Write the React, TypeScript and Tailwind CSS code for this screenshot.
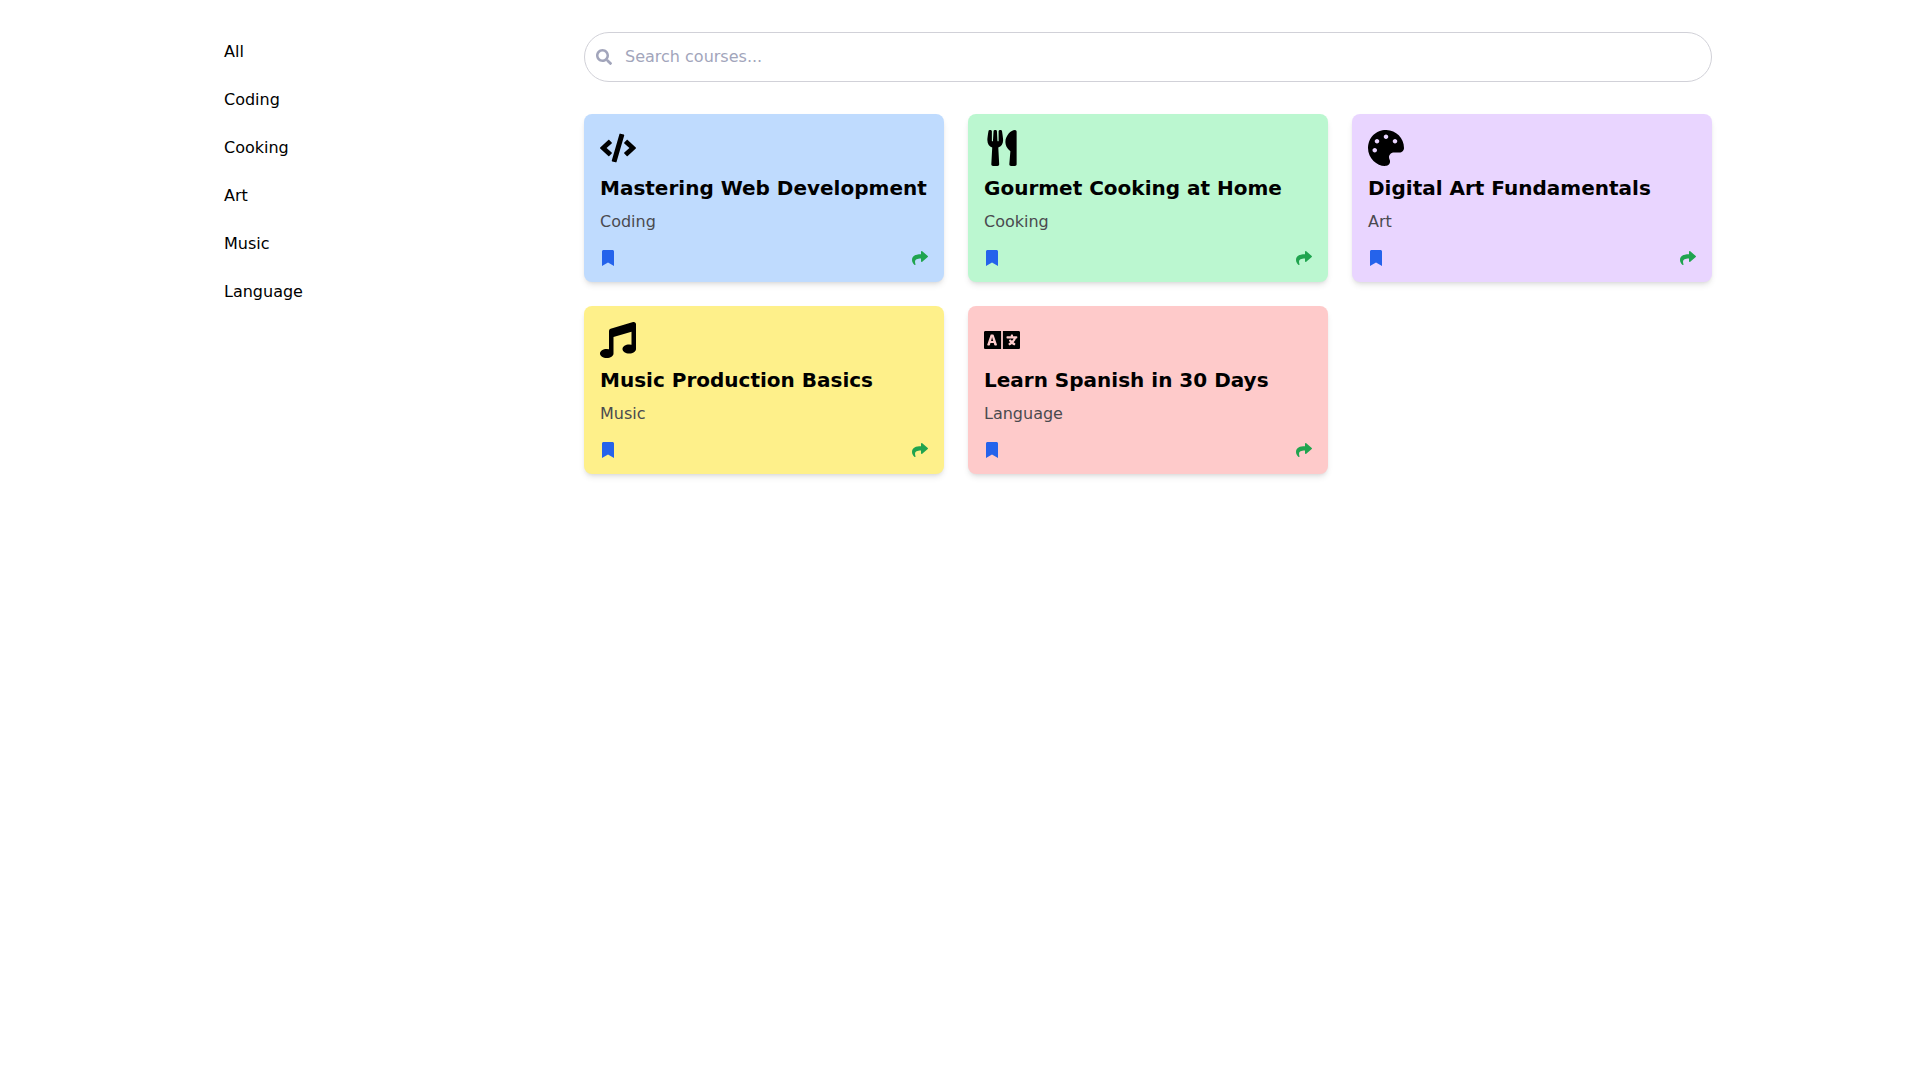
import { useState } from "react";
import type { IconType } from "react-icons";
import {
  FaBookmark,
  FaCode,
  FaLanguage,
  FaMusic,
  FaPalette,
  FaSearch,
  FaShare,
  FaUtensils,
} from "react-icons/fa";

type Course = {
  title: string;
  category: string;
  color: string;
  icon: IconType;
};

const categories = ["All", "Coding", "Cooking", "Art", "Music", "Language"];

const courses: Course[] = [
  { title: "Mastering Web Development", category: "Coding", color: "bg-[#bfdbfe]", icon: FaCode },
  { title: "Gourmet Cooking at Home", category: "Cooking", color: "bg-[#bbf7d0]", icon: FaUtensils },
  { title: "Digital Art Fundamentals", category: "Art", color: "bg-[#e9d5ff]", icon: FaPalette },
  { title: "Music Production Basics", category: "Music", color: "bg-[#fef08a]", icon: FaMusic },
  { title: "Learn Spanish in 30 Days", category: "Language", color: "bg-[#fecaca]", icon: FaLanguage },
];

function CourseCard({ course }: { course: Course }) {
  const Icon = course.icon;
  return (
    <article className={`rounded-lg p-4 shadow-md ${course.color}`}>
      <Icon className="mb-2 text-4xl" />
      <h3 className="mb-2 text-xl font-bold">{course.title}</h3>
      <p className="mb-4 text-[#4a4a4f]">{course.category}</p>
      <div className="flex justify-between">
        <button type="button" aria-label={`Bookmark ${course.title}`} className="text-[#2563eb]">
          <FaBookmark />
        </button>
        <button type="button" aria-label={`Share ${course.title}`} className="text-[#20a44f]">
          <FaShare />
        </button>
      </div>
    </article>
  );
}

export default function App() {
  const [category, setCategory] = useState("All");
  const [query, setQuery] = useState("");

  const visible = courses.filter(
    (c) =>
      (category === "All" || c.category === category) &&
      c.title.toLowerCase().includes(query.toLowerCase()),
  );

  return (
    <div className="container mx-auto px-4 py-8 font-['DejaVu_Sans',sans-serif] text-black">
      <div className="flex flex-col md:flex-row">
        <nav aria-label="Categories" className="mb-8 md:mb-0 md:w-1/4 md:pr-8">
          <ul className="space-y-2">
            {categories.map((name) => (
              <li key={name}>
                <button
                  type="button"
                  onClick={() => setCategory(name)}
                  className="w-full rounded-lg px-4 py-2 text-left"
                >
                  {name}
                </button>
              </li>
            ))}
          </ul>
        </nav>
        <main className="md:w-3/4">
          <div className="relative mb-8">
            <input
              type="text"
              aria-label="Search courses"
              placeholder="Search courses..."
              value={query}
              onChange={(e) => setQuery(e.target.value)}
              className="w-full rounded-full border border-[#d1d1d8] py-3 pr-4 pl-10 placeholder:text-[#a2a5bb]"
            />
            <FaSearch className="absolute top-1/2 left-3 -translate-y-1/2 text-[#a2a5bb]" />
          </div>
          <div className="grid grid-cols-1 gap-6 md:grid-cols-2 lg:grid-cols-3">
            {visible.map((course) => (
              <CourseCard key={course.title} course={course} />
            ))}
          </div>
        </main>
      </div>
    </div>
  );
}
